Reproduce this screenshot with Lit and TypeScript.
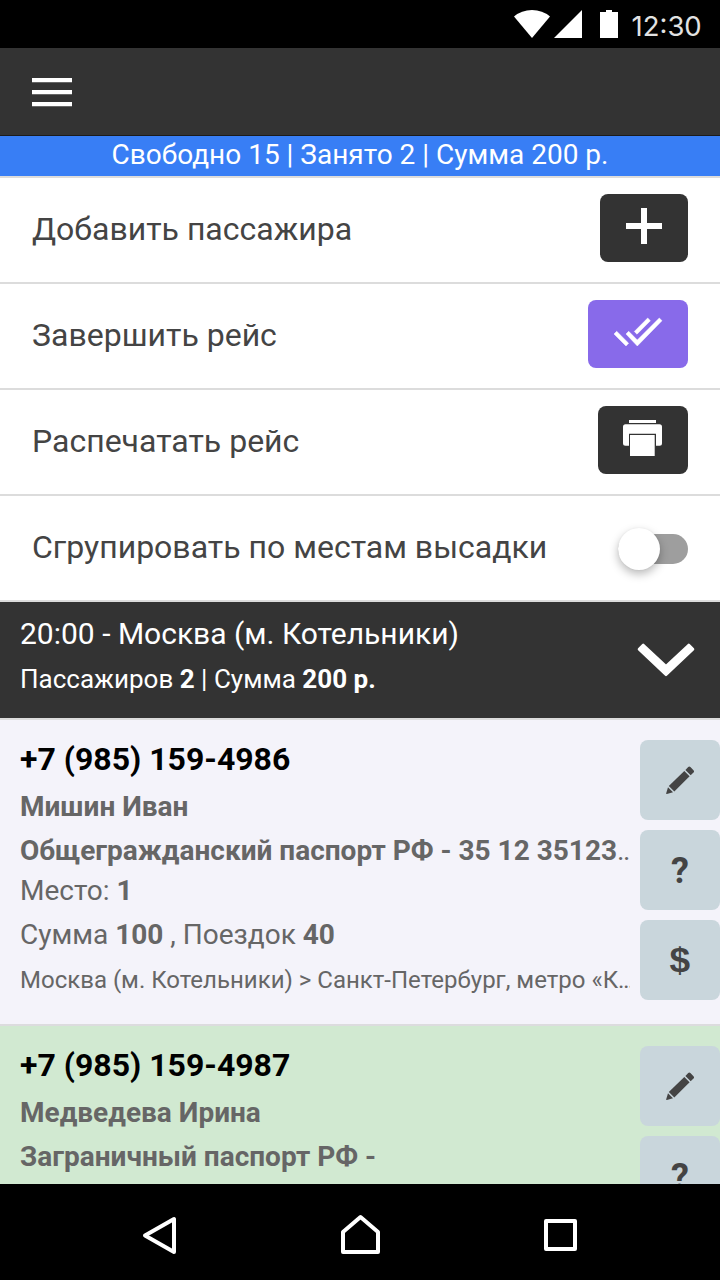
import { LitElement, html, css, svg } from "lit";
import { customElement, property } from "lit/decorators.js";

interface Passenger {
  phone: string;
  name: string;
  doc: string;
  cut: boolean;
  seat: string;
  sum: string;
  trips: string;
  route: string;
  boarded: boolean;
}

const passengers: Passenger[] = [
  {
    phone: "+7 (985) 159-4986",
    name: "Мишин Иван",
    doc: "Общегражданский паспорт РФ - 35 12 35123",
    cut: true,
    seat: "1",
    sum: "100",
    trips: "40",
    route: "Москва (м. Котельники) > Санкт-Петербург, метро «К",
    boarded: false,
  },
  {
    phone: "+7 (985) 159-4987",
    name: "Медведева Ирина",
    doc: "Заграничный паспорт РФ -",
    cut: false,
    seat: "",
    sum: "",
    trips: "",
    route: "",
    boarded: true,
  },
];

const pencil = svg`<svg width="28" height="29" viewBox="0 0 28 29" fill="#444">
  <path d="M19.4 3.9 22.2 1.1Q23.3 0 24.4 1.1L27.5 4.2Q28.6 5.3 27.5 6.4L24.7 9.2Z"/>
  <path d="M18.3 5 23.6 10.3 8.3 25.4 2.8 19.9Z"/>
  <path d="M2 21.2 7 26.2 .9 28Q0 28.2 .2 27.3Z"/>
</svg>`;

@customElement("passenger-card")
export class PassengerCard extends LitElement {
  @property({ attribute: false }) data!: Passenger;

  static styles = css`
    :host { display: block; }
    .card {
      display: flex;
      height: 304px;
      border-bottom: 2px solid #dcdcde;
      background: #f4f3fa;
      color: #666;
    }
    .boarded { background: #d1e9d1; }
    .info { width: 610px; flex: none; padding: 19px 0 0 20px; }
    .info div { line-height: 40px; white-space: pre; overflow: hidden; font-size: 28px; }
    .info .phone { font-size: 32px; font-weight: 700; color: #000; }
    .info .name { margin-top: 8px; font-weight: 700; }
    .info .doc { margin-top: 4px; }
    .info .sum { margin-top: 4px; }
    .info .route { margin-top: 5px; font-size: 24px; }
    b { font-weight: 700; }
    .actions { display: flex; flex-direction: column; gap: 10px; margin-left: auto; padding-top: 20px; }
    .btn {
      box-sizing: border-box;
      width: 80px;
      height: 80px;
      border-radius: 8px;
      background: #c9d6dc;
      color: #444;
      display: flex;
      align-items: center;
      justify-content: center;
      font-size: 36px;
      font-weight: 700;
    }
    .ask { padding-top: 2px; }
    .usd { font-family: "Liberation Sans", sans-serif; font-size: 35px; padding-bottom: 1px; }
    .usd span { transform: scaleX(1.06); }
  `;

  render() {
    const p = this.data;
    return html`<div class="card ${p.boarded ? "boarded" : ""}">
      <div class="info">
        <div class="phone">${p.phone}</div>
        <div class="name">${p.name}</div>
        <div class="doc"><b>${p.doc}</b>${p.cut ? "…" : ""}</div>
        ${p.seat
          ? html`<div>Место: <b>${p.seat}</b></div>
              <div class="sum">Сумма <b>${p.sum}</b> , Поездок <b>${p.trips}</b></div>
              <div class="route">${p.route}…</div>`
          : ""}
      </div>
      <div class="actions">
        <div class="btn">${pencil}</div>
        <div class="btn ask">?</div>
        ${p.seat ? html`<div class="btn usd"><span>$</span></div>` : ""}
      </div>
    </div>`;
  }
}

@customElement("app-root")
export class AppRoot extends LitElement {
  static styles = css`
    :host {
      display: flex;
      flex-direction: column;
      width: 720px;
      height: 1280px;
      overflow: hidden;
      background: #fff;
      font-family: Roboto, sans-serif;
    }
    svg { display: block; }
    .status {
      box-sizing: border-box;
      height: 48px;
      flex: none;
      background: #000;
      display: flex;
      padding-left: 514px;
    }
    .status svg { margin-top: 10px; flex: none; }
    .time {
      margin-left: 11.5px;
      line-height: 52px;
      font-family: Inter, sans-serif;
      font-size: 27.5px;
      font-weight: 400;
      color: #e2e2e2;
    }
    .header {
      box-sizing: border-box;
      height: 88px;
      flex: none;
      background: #333;
      border-bottom: 1px solid #1c1c1c;
      padding: 30px 32px;
    }
    .totals {
      height: 40px;
      flex: none;
      line-height: 37px;
      background: #387ef5;
      color: #fff;
      font-size: 28px;
      text-align: center;
    }
    .content { flex: 1; min-height: 0; overflow: hidden; }
    .row {
      display: flex;
      justify-content: space-between;
      box-sizing: border-box;
      height: 106px;
      border-top: 2px solid #dcdcdc;
      padding: 0 32px;
      color: #444;
      font-size: 32px;
      line-height: 102px;
    }
    .btn {
      height: 68px;
      margin-top: 16px;
      border-radius: 8px;
      background: #333;
      display: flex;
      justify-content: center;
    }
    .add { width: 88px; }
    .finish { width: 100px; background: #886aea; }
    .print { width: 90px; }
    .toggle {
      width: 70px;
      height: 30px;
      margin-top: 38px;
      border-radius: 15px;
      background: #9e9e9e;
      display: flex;
      align-items: center;
    }
    .knob {
      width: 42px;
      height: 42px;
      flex: none;
      border-radius: 50%;
      background: #fff;
      box-shadow: 0 4px 10px rgba(0, 0, 0, 0.28), 0 0 2px rgba(0, 0, 0, 0.06);
    }
    .group {
      display: flex;
      justify-content: space-between;
      height: 116px;
      border-top: 2px solid #dcdcdc;
      border-bottom: 2px solid #dcdcdc;
      background: #333;
      color: #fff;
      padding: 0 25px 0 20px;
    }
    .title { margin-top: 12px; line-height: 40px; font-size: 30px; }
    .sub { margin-top: 5px; line-height: 40px; font-size: 26px; }
    .chev { margin-top: 41px; }
    .nav {
      height: 96px;
      flex: none;
      background: #000;
      display: grid;
      grid-template-columns: repeat(3, 200px);
      justify-content: center;
      justify-items: center;
      align-items: center;
    }
  `;

  render() {
    return html`
      <div class="status">
        <svg width="106" height="28" viewBox="0 0 106 28" fill="#fff">
          <path d="M0 6.5Q7.5 0 18 0T36 6.5L18 28Z" />
          <path d="M40 28 68 0V28Z" />
          <path d="M86 2h6V0h6v2h6v26H86Z" />
        </svg>
        <span class="time">12:30</span>
      </div>
      <div class="header">
        <svg width="40" height="29" viewBox="0 0 40 29" fill="#fff">
          <path d="M0 0h40v4.2H0zM0 12h40v4.2H0zM0 24h40v4.2H0z" />
        </svg>
      </div>
      <div class="totals">Свободно 15 | Занято 2 | Сумма 200 р.</div>
      <div class="content">
        <div class="row">
          <span>Добавить пассажира</span>
          <div class="btn add">
            <svg width="88" height="68" viewBox="600 194 88 68" fill="#fff">
              <path d="M641 208h6v15h15v6h-15v15h-6v-15h-15v-6h15z" />
            </svg>
          </div>
        </div>
        <div class="row">
          <span>Завершить рейс</span>
          <div class="btn finish">
            <svg width="100" height="68" viewBox="588 300 100 68" fill="#fff" stroke="#fff" stroke-width="0.5">
              <path d="M614 334 616.7 331.3 628.6 343.2 626 346Z" />
              <path d="M626 334 628.7 331.3 637.3 340 659.3 318 662 320.7 637.3 346Z" />
              <path d="M634.3 331.5 647.7 318 650.4 320.7 637 334.2Z" />
            </svg>
          </div>
        </div>
        <div class="row">
          <span>Распечатать рейс</span>
          <div class="btn print">
            <svg width="90" height="68" viewBox="598 406 90 68" fill="#fff">
              <path d="M629 420h27v3h-27zM630 435h24.7v21H630z" />
              <path d="M625.5 424.3h34q2.5 0 2.5 2.5v16.4q0 2.5-2.5 2.5H656v-12h-27v12h-3.5q-2.5 0-2.5-2.5v-16.4q0-2.5 2.5-2.5z" />
            </svg>
          </div>
        </div>
        <div class="row">
          <span>Сгрупировать по местам высадки</span>
          <div class="toggle"><div class="knob"></div></div>
        </div>
        <div class="group">
          <div>
            <div class="title">20:00 - Москва (м. Котельники)</div>
            <div class="sub">Пассажиров <b>2</b> | Сумма <b>200 р.</b></div>
          </div>
          <svg class="chev" width="58" height="34" viewBox="637 643 58 34" fill="#fff" stroke="#fff" stroke-width="2.6" stroke-linejoin="round">
            <path d="M639 649.2 643.2 644.9 666 666.2 688.8 644.9 693 649.2 666 674.9Z" />
          </svg>
        </div>
        ${passengers.map((p) => html`<passenger-card .data=${p}></passenger-card>`)}
      </div>
      <div class="nav">
        <svg width="40" height="40" viewBox="140 1212 40 40" fill="none" stroke="#fff" stroke-width="4" stroke-linejoin="round" overflow="visible">
          <path d="M145 1235.5 174 1219V1252Z" />
        </svg>
        <svg width="40" height="40" viewBox="340 1212 40 40" fill="none" stroke="#fff" stroke-width="4" stroke-linejoin="round" overflow="visible">
          <path d="M343 1252v-20L360.5 1217 378 1232v20Z" />
        </svg>
        <svg width="40" height="40" viewBox="540 1212 40 40" fill="none" stroke="#fff" stroke-width="4" stroke-linejoin="round" overflow="visible">
          <path d="M546 1221h29v28h-29z" />
        </svg>
      </div>
    `;
  }
}
